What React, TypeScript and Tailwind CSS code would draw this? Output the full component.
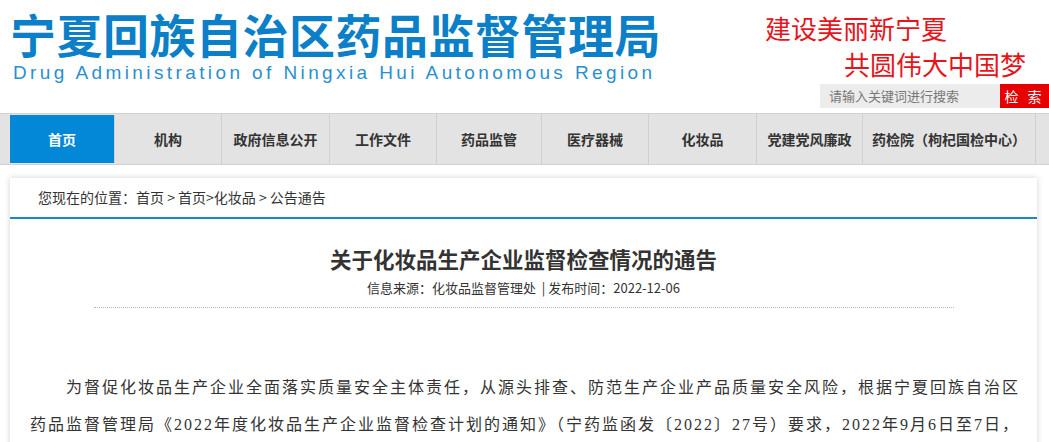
import React from "react";

const cjk = { fontFamily: '"Microsoft YaHei", "Noto Sans CJK SC", sans-serif' };

const navItems: [string, number][] = [
  ["首页", 105],
  ["机构", 107],
  ["政府信息公开", 108],
  ["工作文件", 107],
  ["药品监管", 105],
  ["医疗器械", 107],
  ["化妆品", 108],
  ["党建党风廉政", 106],
  ["药检院（枸杞国检中心）", 173],
];

export default function App() {
  return (
    <div className="w-[1049px] h-[442px] overflow-hidden bg-white" style={cjk}>
      {/* Header */}
      <div className="h-[113px] flex justify-between">
        <div className="pl-[10px] pt-[8px]">
          <div
            className="text-[46px] leading-[50px] font-bold text-[#0b80c8] tracking-[0.5px] whitespace-nowrap"
            style={{ fontFamily: '"Noto Sans CJK SC", sans-serif' }}
          >
            宁夏回族自治区药品监督管理局
          </div>
          <div
            className="text-[19px] leading-[20px] text-[#2a8fd0] tracking-[3.4px] pl-[3px] mt-[5px] whitespace-nowrap"
            style={{ fontFamily: '"Liberation Sans", Arial, sans-serif' }}
          >
            Drug Administration of Ningxia Hui Autonomous Region
          </div>
        </div>
        <div className="flex flex-col items-end pt-[12px]">
          <div className="w-[284px] text-[26px] leading-[32px] text-[#e5151c] font-normal">
            <div>建设美丽新宁夏</div>
            <div className="pl-[79px] mt-[4px]">共圆伟大中国梦</div>
          </div>
          <div className="flex mt-[4px] h-[24px]">
            <div className="w-[180px] bg-[#ececec] text-[13px] leading-[24px] text-[#777] pl-[9px]">
              请输入关键词进行搜索
            </div>
            <div className="w-[49px] bg-[#e60000] text-white text-[14px] leading-[24px] text-center tracking-[3px]">
              检 索
            </div>
          </div>
        </div>
      </div>

      {/* Nav */}
      <div className="h-[52px] bg-[#e3e3e3] border-t border-b border-[#d2d2d2] pl-[10px] flex items-stretch">
        {navItems.map(([label, w], i) => (
          <div
            key={label}
            style={{ width: w }}
            className={
              i === 0
                ? "flex items-center justify-center bg-[#0288d6] text-white text-[14px] font-bold my-[1px] border-r border-[#d0d0d0]"
                : "flex items-center justify-center text-[#333] text-[14px] font-bold border-r border-[#d0d0d0] whitespace-nowrap"
            }
          >
            {label}
          </div>
        ))}
      </div>

      {/* Content card */}
      <div className="mx-[10px] w-[1027px] mt-[13px] bg-white shadow-[0_0_6px_rgba(0,0,0,0.18)] h-[300px]">
        <div className="h-[41px] border-b-2 border-[#1a86cc] pl-[28px] flex items-center text-[14px] text-[#333]">
          您现在的位置：首页 &gt; 首页&gt;化妆品 &gt; 公告通告
        </div>
        <div className="text-center text-[21.5px] font-bold text-[#333] mt-[25px] leading-[30px]">
          关于化妆品生产企业监督检查情况的通告
        </div>
        <div className="text-center text-[13px] text-[#333] mt-[4px] leading-[20px]">
          信息来源：化妆品监督管理处&nbsp;&nbsp;|&nbsp;发布时间：2022-12-06
        </div>
        <div className="mx-auto w-[860px] border-t border-dotted border-[#bbb] mt-[9px]"></div>
        <div
          className="w-[995px] ml-[20px] mt-[61px] text-[16px] leading-[37px] text-[#333] tracking-[2px] indent-[36px]"
          style={{ fontFamily: '"Liberation Serif", "Noto Sans CJK SC", serif' }}
        >
          为督促化妆品生产企业全面落实质量安全主体责任，从源头排查、防范生产企业产品质量安全风险，根据宁夏回族自治区药品监督管理局《2022年度化妆品生产企业监督检查计划的通知》（宁药监函发〔2022〕27号）要求，2022年9月6日至7日，
        </div>
      </div>
    </div>
  );
}
